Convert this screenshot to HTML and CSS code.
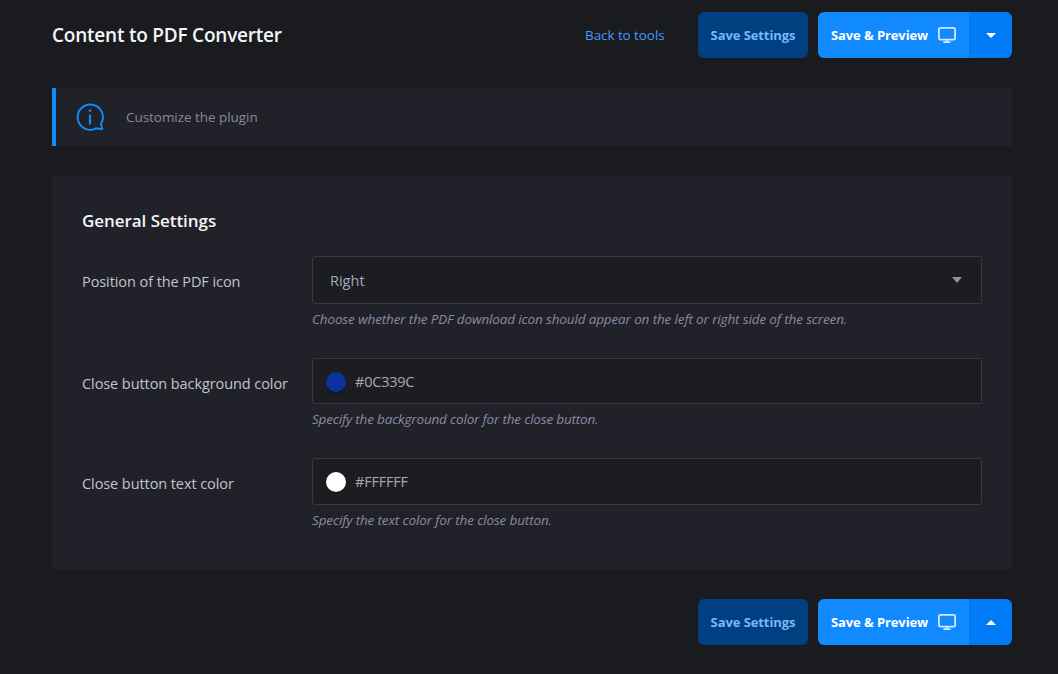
FILE: index.html
```html
<!DOCTYPE html>
<html lang="en">
<head>
<meta charset="utf-8">
<title>Content to PDF Converter</title>
<link rel="stylesheet" href="styles.css">
</head>
<body>
<main class="page">
  <header class="toolbar">
    <h1 class="title">Content to PDF Converter</h1>
    <a class="back" href="#">Back to tools</a>
    <button class="btn btn-save">Save Settings</button>
    <div class="split">
      <button class="btn btn-preview"><span>Save &amp; Preview</span>
        <svg class="monitor" viewBox="0 0 18 16"><rect x=".9" y=".9" width="16.2" height="11.8" rx="1.6"/><path d="M9 12.7v2.4M5.4 15.1h7.2"/></svg>
      </button>
      <button class="btn btn-toggle" aria-label="More"><svg class="caret" viewBox="0 0 10 5"><path d="M0 0h10L5 5z"/></svg></button>
    </div>
  </header>

  <section class="notice">
    <svg class="info" viewBox="0 0 28 28"><path d="M25.2 20.5A12.6 12.6 0 1 0 20.6 25.1Q22.8 26.3 26.4 25.8Q24.8 23.6 25.2 20.5Z"/><path class="stem" d="M14 11.6v9.9"/><circle class="dot" cx="14" cy="7.6" r="1.3"/></svg>
    <span class="notice-text">Customize the plugin</span>
  </section>

  <section class="card">
    <h2 class="card-title">General Settings</h2>
    <div class="row row-select">
      <label class="label">Position of the PDF icon</label>
      <div class="control">
        <div class="field select"><span class="value">Right</span><svg class="caret" viewBox="0 0 10 6"><path d="M0 0h10L5 6z"/></svg></div>
        <p class="help">Choose whether the PDF download icon should appear on the left or right side of the screen.</p>
      </div>
    </div>
    <div class="row row-bg">
      <label class="label">Close button background color</label>
      <div class="control">
        <div class="field color"><i class="swatch blue"></i><span class="hex">#0C339C</span></div>
        <p class="help help-bg">Specify the background color for the close button.</p>
      </div>
    </div>
    <div class="row">
      <label class="label">Close button text color</label>
      <div class="control">
        <div class="field color tall"><i class="swatch white"></i><span class="hex">#FFFFFF</span></div>
        <p class="help">Specify the text color for the close button.</p>
      </div>
    </div>
  </section>

  <footer class="toolbar">
    <button class="btn btn-save">Save Settings</button>
    <div class="split">
      <button class="btn btn-preview"><span>Save &amp; Preview</span>
        <svg class="monitor" viewBox="0 0 18 16"><rect x=".9" y=".9" width="16.2" height="11.8" rx="1.6"/><path d="M9 12.7v2.4M5.4 15.1h7.2"/></svg>
      </button>
      <button class="btn btn-toggle" aria-label="More"><svg class="caret" viewBox="0 0 10 5"><path d="M0 5h10L5 0z"/></svg></button>
    </div>
  </footer>
</main>
</body>
</html>
```
FILE: styles.css
```css
* { box-sizing: border-box; }
body { margin: 0; background: #1a1b1f; font-family: "Segoe UI", "Open Sans", "Noto Sans", sans-serif; white-space: nowrap; }
h1, h2, p { margin: 0; }
.page { width: 1058px; height: 674px; padding: 12px 46px 0 52px; }
.toolbar { display: flex; align-items: center; justify-content: flex-end; height: 46px; }
.title { margin-right: auto; color: #f5f5f7; font-size: 19px; font-weight: 600; line-height: 28px; letter-spacing: -0.22px; }
.back { width: 80px; margin-right: 33px; color: #3f9bff; font-size: 13.5px; line-height: 20px; text-decoration: none; letter-spacing: -0.08px; }
.btn { display: flex; align-items: center; justify-content: center; height: 46px; margin: 0; padding: 0; border: 0; color: #fff; font-family: inherit; font-size: 13px; font-weight: 700; line-height: 20px; white-space: nowrap; letter-spacing: -0.08px; }
.btn-save { width: 110px; margin-right: 10px; border-radius: 6px; background: #004080; color: #73b9ff; }
.split { display: flex; width: 194px; border-radius: 6px; overflow: hidden; }
.btn-preview { width: 151px; padding: 0 13px; justify-content: space-between; background: #128aff; letter-spacing: -0.1px; }
.btn-toggle { width: 43px; background: #007af5; }
.monitor { width: 18px; height: 16px; fill: none; stroke: #d2e8ff; stroke-width: 1.8; }
.caret { width: 10px; height: 5px; fill: currentColor; }
.notice { display: flex; align-items: center; height: 58px; margin-top: 30px; padding-left: 20px; border-left: 4px solid #128aff; background: #212129; }
.info { width: 28px; height: 28px; margin-right: 22px; fill: none; stroke: #128aff; stroke-width: 1.9; stroke-linejoin: round; }
.stem { stroke-width: 2.2; }
.dot { fill: #128aff; stroke: none; }
.notice-text { color: #88889f; font-size: 13.5px; line-height: 20px; letter-spacing: -0.05px; }
.card { height: 393px; margin-top: 30px; padding: 30px; border-radius: 5px; background: #212129; }
.card-title { height: 30px; color: #f5f5f7; font-size: 17px; font-weight: 600; line-height: 29px; letter-spacing: -0.05px; }
.row { display: grid; grid-template-columns: 230px 670px; }
.row-select { height: 102px; margin-top: 20px; }
.row-bg { height: 100px; }
.label { padding-top: 16px; color: #c3c3cf; font-size: 14.5px; line-height: 20px; letter-spacing: -0.08px; }
.field { display: flex; align-items: center; height: 46px; border: 1px solid #383847; border-radius: 3px; background: #1c1d21; color: #a8a8b8; font-size: 14.5px; line-height: 20px; }
.select { height: 48px; justify-content: space-between; padding: 0 19px 0 17px; }
.value { padding-top: 2px; }
.select .caret { height: 6px; fill: #92929f; }
.color { padding-left: 13px; }
.color:not(.tall) { padding-top: 1px; }
.tall { height: 47px; }
.hex { letter-spacing: -0.22px; }
.swatch { width: 20px; height: 20px; margin-right: 9px; border-radius: 50%; box-shadow: 0 1px 2px #0006; }
.blue { background: #0c339c; }
.white { background: #fff; }
.help { padding-top: 5px; color: #8a8aa3; font-size: 13.5px; font-style: italic; line-height: 20px; letter-spacing: -0.14px; }
.help-bg { letter-spacing: -0.18px; }
footer.toolbar { margin-top: 30px; }
```
